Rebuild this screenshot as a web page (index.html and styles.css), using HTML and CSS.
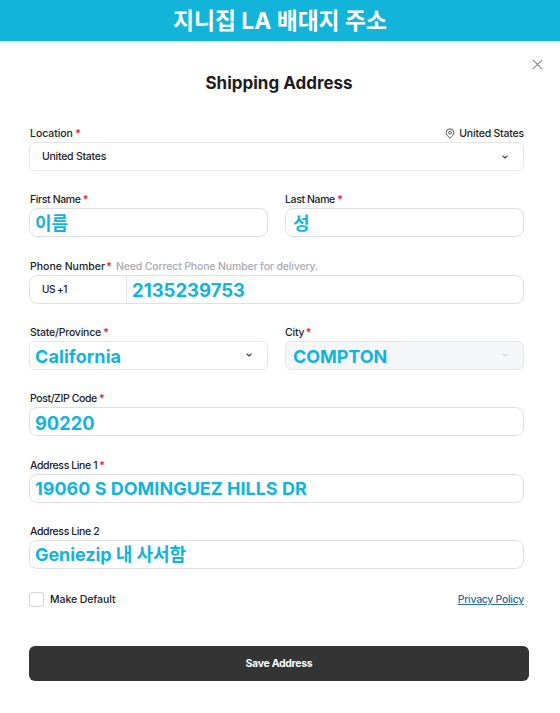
FILE: index.html
```html
<!DOCTYPE html>
<html lang="ko">
<head>
<meta charset="utf-8">
<title>Shipping Address</title>
<link rel="stylesheet" href="styles.css">
</head>
<body>
<header class="banner">지니집 LA 배대지 주소</header>
<main class="dialog">
  <div class="close-row">
    <svg class="close" viewBox="0 0 10 10"><path d="M.7.7l8.6 8.6M9.3.7L.7 9.3"/></svg>
  </div>
  <h1 class="title">Shipping Address</h1>
  <form class="form">
    <div class="field wide">
      <div class="label"><span class="t-location">Location</span><b>*</b>
        <span class="place"><svg class="pin" viewBox="0 0 10 12"><path d="M5 10.2C2.5 8.100 1.200 6.500 1.200 4.600a3.800 3.800 0 0 1 7.600 0C8.800 6.500 7.500 8.100 5 10.200z"/><circle cx="5" cy="4.600" r="1.400"/></svg><span class="t-place">United States</span></span>
      </div>
      <div class="box select plain"><span class="t-country">United States</span><svg class="chevron" viewBox="0 0 8 6"><path d="M1.500 1.700L4 3.900l2.500-2.200"/></svg></div>
    </div>
    <div class="field">
      <div class="label"><span class="t-name">First Name</span><b>*</b></div>
      <div class="box value">이름</div>
    </div>
    <div class="field">
      <div class="label right"><span class="t-name">Last Name</span><b>*</b></div>
      <div class="box value indent">성</div>
    </div>
    <div class="field wide">
      <div class="label"><span class="t-phone">Phone Number</span><b class="tight">*</b><span class="hint">Need Correct Phone Number for delivery.</span></div>
      <div class="box phone"><span class="code">US +1</span><span class="value v-phone">2135239753</span></div>
    </div>
    <div class="field">
      <div class="label"><span class="t-state">State/Province</span><b>*</b></div>
      <div class="box select value"><span class="v-state">California</span><svg class="chevron" viewBox="0 0 8 6"><path d="M1.500 1.700L4 3.900l2.500-2.200"/></svg></div>
    </div>
    <div class="field">
      <div class="label right"><span class="t-city">City</span><b class="tight">*</b></div>
      <div class="box select value indent disabled"><span class="v-city">COMPTON</span><svg class="chevron" viewBox="0 0 8 6"><path d="M1.500 1.700L4 3.900l2.500-2.200"/></svg></div>
    </div>
    <div class="field wide">
      <div class="label"><span class="t-line">Post/ZIP Code</span><b>*</b></div>
      <div class="box value"><span class="v-zip">90220</span></div>
    </div>
    <div class="field wide">
      <div class="label"><span class="t-line">Address Line 1</span><b>*</b></div>
      <div class="box value"><span class="v-line1">19060 S DOMINGUEZ HILLS DR</span></div>
    </div>
    <div class="field wide">
      <div class="label"><span class="t-line">Address Line 2</span></div>
      <div class="box value last"><span class="v-line2">Geniezip 내 사서함</span></div>
    </div>
  </form>
  <div class="options">
    <span class="check"></span><span class="t-default">Make Default</span>
    <a class="policy">Privacy Policy</a>
  </div>
  <div class="save"><span>Save Address</span></div>
</main>
</body>
</html>
```
FILE: styles.css
```css
* { box-sizing: border-box; }
body {
  margin: 0;
  background: #fff;
  color: #222229;
  font: 500 10.5px/14px Inter, "Noto Sans CJK KR", sans-serif;
  white-space: nowrap;
}
.banner {
  height: 41px;
  background: #13b4da;
  color: #fff;
  text-align: center;
  font-size: 22.8px;
  font-weight: 700;
  line-height: 41px;
}
.close-row { display: flex; justify-content: flex-end; padding: 18px 17px 0 0; }
.close { width: 11px; height: 11px; fill: none; stroke: #888; stroke-width: 1; }
.title {
  margin: 3px 0 0;
  padding-right: 2px;
  height: 20px;
  text-align: center;
  font: 700 17px/20px Inter, sans-serif;
  color: #1d1d1f;
}
.form {
  display: grid;
  grid-template-columns: 239px 239px;
  grid-auto-rows: 66.35px;
  column-gap: 17px;
  margin: 33px 0 0 29px;
}
.wide { grid-column: 1 / 3; }
.label { display: flex; height: 16px; padding-left: 1px; line-height: 16px; letter-spacing: -.2px; }
.label.right { padding-left: 0; }
.label b { margin-left: 2px; color: #e8303a; font-size: 11px; line-height: 15px; }
.label .tight { margin-left: 1px; }
.t-location { letter-spacing: -.05px; }
.t-name { letter-spacing: -.38px; }
.t-phone { letter-spacing: 0; }
.t-line { letter-spacing: -.4px; }
.place { display: flex; margin-left: auto; }
.pin { width: 10px; height: 12px; margin: 2px 4px 0 0; fill: none; stroke: #44444a; stroke-width: .9; }
.hint { margin-left: 4px; color: #aaaab2; letter-spacing: -.15px; }
.box {
  display: flex;
  align-items: center;
  height: 29px;
  border: 1px solid #e0e0e2;
  border-radius: 8px;
  padding-left: 5px;
}
.value { color: #13b4da; font-size: 18px; font-weight: 650; line-height: 26px; padding-top: 2px; }
.last { padding-top: 1px; }
.indent { padding-left: 7px; }
.select { border-radius: 6px; justify-content: space-between; padding-right: 13px; border-color: #e6e6e9; }
.plain { padding-left: 12px; letter-spacing: -.25px; }
.chevron { width: 8px; height: 6px; margin-right: 1px; fill: none; stroke: #333; stroke-width: 1.1; }
.value .chevron { margin-top: -3px; }
.disabled { background: #f6f7f9; }
.disabled .chevron { stroke: #d4d6da; }
.phone { padding-left: 0; }
.code { width: 97px; height: 27px; padding-left: 12px; border-right: 1px solid #e4e4e7; line-height: 27px; font-size: 10px; letter-spacing: -.5px; }
.v-phone { padding-left: 5px; font-size: 18.500px; }
.v-state { letter-spacing: .08px; }
.v-city { letter-spacing: -.08px; }
.v-zip { font-size: 18.300px; }
.v-line1 { letter-spacing: 0; }
.v-line2 { letter-spacing: -.08px; }
.options { display: flex; align-items: center; height: 14px; margin: 2px 36px 0 29px; }
.check { width: 15px; height: 15px; margin-right: 6px; border: 1px solid #d4d4d7; border-radius: 3px; }
.t-default { padding-top: 2px; letter-spacing: -.08px; }
.policy { margin-left: auto; padding-top: 2px; color: #286ca8; text-decoration: underline; letter-spacing: -.3px; }
.save {
  display: flex;
  align-items: center;
  justify-content: center;
  height: 35px;
  margin: 40px 31px 0 29px;
  border-radius: 6px;
  background: #343434;
  color: #fff;
  font-weight: 700;
  letter-spacing: -.3px;
}
```
